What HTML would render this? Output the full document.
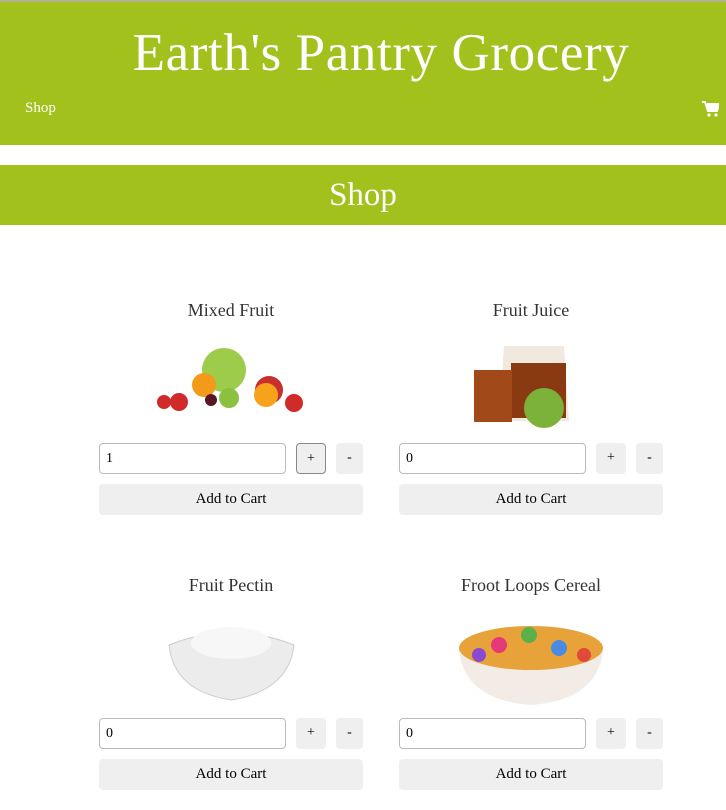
<!DOCTYPE html>
<html><head><meta charset="utf-8"><style>
*{box-sizing:border-box;margin:0;padding:0}
body{width:726px;height:810px;overflow:hidden;background:#fff;font-family:"Liberation Serif",serif;position:relative}
.top{position:absolute;top:0;left:0;width:726px;height:2px;background:#b5ae8f}
.hdr{position:absolute;top:2px;left:0;width:726px;height:143px;background:#a3c11d}
.hdr h1{position:absolute;top:21px;left:0;width:100%;text-align:center;padding-left:36px;font-weight:normal;font-size:53px;letter-spacing:0.6px;color:#fff}
.nav{position:absolute;left:25px;top:98px;color:#fff;font-size:15px}
.cart{position:absolute;left:702px;top:99px}
.ban{position:absolute;top:165px;left:0;width:726px;height:60px;background:#a3c11d;color:#fff;font-size:33px;text-align:center;line-height:60px}
.card{position:absolute;width:264px}
.card h3{font-weight:normal;font-size:18px;color:#333;text-align:center;height:20px;line-height:20px}
.img{position:absolute;left:0;width:264px}
.inp{position:absolute;left:0;width:187px;height:31px;border:1px solid #bbb;border-radius:4px;font-size:14px;padding:6px 6px;color:#000;font-family:"Liberation Serif",serif}
.b{position:absolute;width:30px;height:31px;background:#efefef;border-radius:4px;text-align:center;line-height:30px;font-size:14px}
.add{position:absolute;left:0;width:264px;height:31px;background:#efefef;border-radius:4px;text-align:center;line-height:30px;font-size:15px}
</style></head><body>
<div class="top"></div>
<div class="hdr"><h1>Earth's Pantry Grocery</h1><div class="nav">Shop</div>
<svg class="cart" width="17" height="16" viewBox="0 0 17 16"><path d="M0 1h3l3 9h9l2-7H5" fill="none" stroke="#fff" stroke-width="2"/><path d="M5 3h12l-2 7H6z" fill="#fff"/><circle cx="7" cy="14" r="1.6" fill="#fff"/><circle cx="14" cy="14" r="1.6" fill="#fff"/></svg></div>
<div class="ban">Shop</div>

<div class="card" style="left:99px;top:300px"><h3>Mixed Fruit</h3>
<svg class="img" style="top:40px" height="80" viewBox="0 0 264 80"><g><circle cx="125" cy="30" r="22" fill="#9ccc4a"/><circle cx="105" cy="45" r="12" fill="#f39a1a"/><circle cx="170" cy="50" r="14" fill="#c83030"/><circle cx="167" cy="55" r="12" fill="#f7a21b"/><circle cx="80" cy="62" r="9" fill="#d02a2a"/><circle cx="65" cy="62" r="7" fill="#d02a2a"/><circle cx="195" cy="63" r="9" fill="#d02a2a"/><circle cx="130" cy="58" r="10" fill="#8bc040"/><circle cx="112" cy="60" r="6" fill="#5a1626"/></g></svg>
<input class="inp" style="top:143px" value="1"><div class="b" style="left:197px;top:143px;border:1px solid #888">+</div><div class="b" style="left:237px;top:143px;width:27px">-</div><div class="add" style="top:184px">Add to Cart</div></div>

<div class="card" style="left:399px;top:300px"><h3>Fruit Juice</h3>
<svg class="img" style="top:38px" height="90" viewBox="0 0 264 90"><path d="M105 8h60l5 75h-70z" fill="#e8d9c8" opacity=".6"/><rect x="112" y="25" width="55" height="55" fill="#8a3a10"/><rect x="75" y="32" width="38" height="52" fill="#a2491a"/><circle cx="145" cy="70" r="20" fill="#7db23a"/></svg>
<input class="inp" style="top:143px" value="0"><div class="b" style="left:197px;top:143px">+</div><div class="b" style="left:237px;top:143px;width:27px">-</div><div class="add" style="top:184px">Add to Cart</div></div>

<div class="card" style="left:99px;top:575px"><h3>Fruit Pectin</h3>
<svg class="img" style="top:40px" height="90" viewBox="0 0 264 90"><path d="M70 30q62-25 125 0q-5 45-62 55q-58-8-63-55z" fill="#ececec" stroke="#ccc"/><ellipse cx="132" cy="28" rx="40" ry="16" fill="#f7f7f7"/></svg>
<input class="inp" style="top:143px" value="0"><div class="b" style="left:197px;top:143px">+</div><div class="b" style="left:237px;top:143px;width:27px">-</div><div class="add" style="top:184px">Add to Cart</div></div>

<div class="card" style="left:399px;top:575px"><h3>Froot Loops Cereal</h3>
<svg class="img" style="top:35px" height="100" viewBox="0 0 264 100"><path d="M60 40h144q-5 50-72 55q-67-5-72-55z" fill="#f3ece6"/><ellipse cx="132" cy="38" rx="72" ry="22" fill="#e7a33a"/><circle cx="100" cy="35" r="8" fill="#e43a7a"/><circle cx="130" cy="25" r="8" fill="#5ab04a"/><circle cx="160" cy="38" r="8" fill="#4a8ae0"/><circle cx="80" cy="45" r="7" fill="#8a4ad0"/><circle cx="185" cy="45" r="7" fill="#e04a3a"/></svg>
<input class="inp" style="top:143px" value="0"><div class="b" style="left:197px;top:143px">+</div><div class="b" style="left:237px;top:143px;width:27px">-</div><div class="add" style="top:184px">Add to Cart</div></div>
</body></html>
